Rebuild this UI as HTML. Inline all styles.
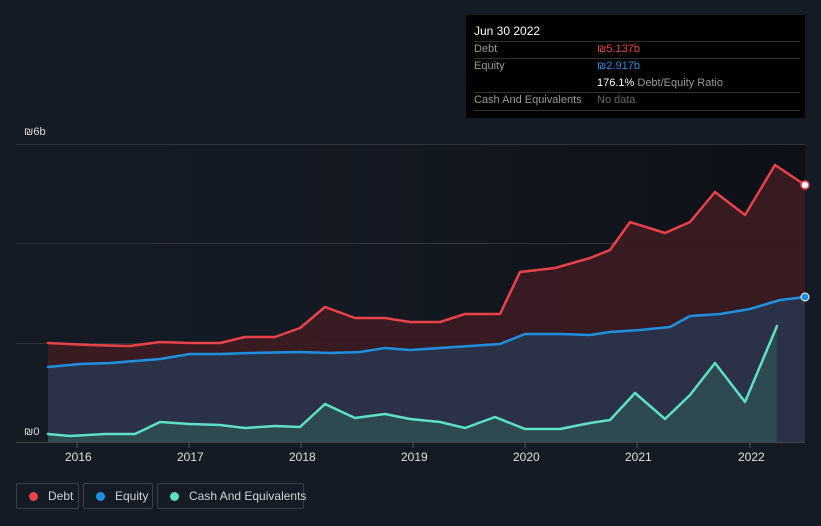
<!DOCTYPE html>
<html><head><meta charset="utf-8"><style>
html,body{margin:0;width:821px;height:526px;overflow:hidden}
body{background:#151b25;font-family:"Liberation Sans",sans-serif;position:relative}
.tt{position:absolute;left:466px;top:15px;width:339px;height:103px;background:#000;color:#fff;font-size:11px}
.tt div{white-space:nowrap}
.tt .r{position:absolute;left:8px;right:5px;border-bottom:1px solid #333}
.lg{position:absolute;top:483px;height:26px;border:1px solid #3a3f4a;border-radius:2px;color:#d0d3d8;font-size:12px;line-height:24px;box-sizing:border-box;white-space:nowrap}
.lg i{display:inline-block;width:9px;height:9px;border-radius:50%;margin:0 10px 0 12px;vertical-align:-1px}
.ax{position:absolute;top:450px;color:#e0e0e0;font-size:12px}
</style></head><body>
<svg width="821" height="526" style="position:absolute;left:0;top:0">
<defs><linearGradient id="bg" x1="0" x2="1"><stop offset="0" stop-color="#151b25" stop-opacity="0"/><stop offset="1" stop-color="#0c0f15"/></linearGradient></defs>
<rect x="16" y="144" width="789" height="299" fill="url(#bg)"/>
<g stroke="#2e333d" stroke-width="1"><line x1="16" y1="144.5" x2="805" y2="144.5"/><line x1="16" y1="243.5" x2="805" y2="243.5"/><line x1="16" y1="343.5" x2="805" y2="343.5"/><line x1="16" y1="442.5" x2="805" y2="442.5" stroke="#444"/></g>
<polygon fill="#3d1c22" opacity="0.9" points="48,343 90,345 130,346 160,342 190,343 220,343 245,337 275,337 300,328 325,307 355,318 385,318 410,322 440,322 465,314 500,314 520,272 555,268 590,258 610,250 630,222 665,233 690,222 715,192 745,215 775,165 805,185 805,442 48,442"/>
<polygon fill="#2b3248" points="48,367 80,364 110,363 160,359 190,354 220,354 250,353 300,352 330,353 360,352 385,348 410,350 440,348 470,346 500,344 525,334 560,334 590,335 610,332 640,330 670,327 690,316 720,314 750,309 780,300 805,297 805,442 48,442"/>
<polygon fill="#2f4b50" opacity="0.9" points="48,434 70,436 105,434 135,434 160,422 190,424 220,425 245,428 275,426 300,427 325,404 355,418 385,414 410,419 440,422 465,428 495,417 525,429 560,429 590,423 610,420 635,393 665,419 690,395 715,363 745,402 777,326 777,442 48,442"/>
<g fill="none" stroke-width="2.5" stroke-linejoin="round" stroke-linecap="round">
<polyline stroke="#e8424a" points="48,343 90,345 130,346 160,342 190,343 220,343 245,337 275,337 300,328 325,307 355,318 385,318 410,322 440,322 465,314 500,314 520,272 555,268 590,258 610,250 630,222 665,233 690,222 715,192 745,215 775,165 805,185"/>
<polyline stroke="#1f8fe0" points="48,367 80,364 110,363 160,359 190,354 220,354 250,353 300,352 330,353 360,352 385,348 410,350 440,348 470,346 500,344 525,334 560,334 590,335 610,332 640,330 670,327 690,316 720,314 750,309 780,300 805,297"/>
<polyline stroke="#5ee0c8" points="48,434 70,436 105,434 135,434 160,422 190,424 220,425 245,428 275,426 300,427 325,404 355,418 385,414 410,419 440,422 465,428 495,417 525,429 560,429 590,423 610,420 635,393 665,419 690,395 715,363 745,402 777,326"/>
</g>
<circle cx="805" cy="185" r="4" fill="#fff" stroke="#e8424a" stroke-width="1.5"/>
<circle cx="805" cy="297" r="4" fill="#1f8fe0" stroke="#fff" stroke-width="1"/>
<g stroke="#555"><line x1="77" y1="443" x2="77" y2="448"/><line x1="189" y1="443" x2="189" y2="448"/><line x1="301" y1="443" x2="301" y2="448"/><line x1="413" y1="443" x2="413" y2="448"/><line x1="525" y1="443" x2="525" y2="448"/><line x1="637" y1="443" x2="637" y2="448"/><line x1="750" y1="443" x2="750" y2="448"/></g>
<text x="24" y="135" fill="#ddd" font-size="11" font-family="Liberation Sans">₪6b</text>
<text x="24" y="435" fill="#ddd" font-size="11" font-family="Liberation Sans">₪0</text>
</svg>
<div class="ax" style="left:65px">2016</div><div class="ax" style="left:177px">2017</div><div class="ax" style="left:289px">2018</div><div class="ax" style="left:401px">2019</div><div class="ax" style="left:513px">2020</div><div class="ax" style="left:625px">2021</div><div class="ax" style="left:738px">2022</div>
<div class="tt">
<div style="position:absolute;left:8px;top:9px;font-size:12px">Jun 30 2022</div>
<div class="r" style="top:26px"></div>
<div style="position:absolute;left:8px;top:28px;color:#999">Debt</div><div style="position:absolute;left:131px;top:28px;color:#e8424a">₪5.137b</div>
<div class="r" style="top:43px"></div>
<div style="position:absolute;left:8px;top:45px;color:#999">Equity</div><div style="position:absolute;left:131px;top:45px;color:#1f8fe0">₪2.917b</div>
<div style="position:absolute;left:131px;top:62px"><b style="font-weight:normal;color:#fff">176.1%</b> <span style="color:#999">Debt/Equity Ratio</span></div>
<div class="r" style="top:77px"></div>
<div style="position:absolute;left:8px;top:79px;color:#999">Cash And Equivalents</div><div style="position:absolute;left:131px;top:79px;color:#666">No data</div>
<div class="r" style="top:95px"></div>
</div>
<div class="lg" style="left:16px;width:63px"><i style="background:#e8424a"></i>Debt</div>
<div class="lg" style="left:83px;width:70px"><i style="background:#1f8fe0"></i>Equity</div>
<div class="lg" style="left:157px;width:147px"><i style="background:#5ee0c8"></i>Cash And Equivalents</div>
</body></html>
